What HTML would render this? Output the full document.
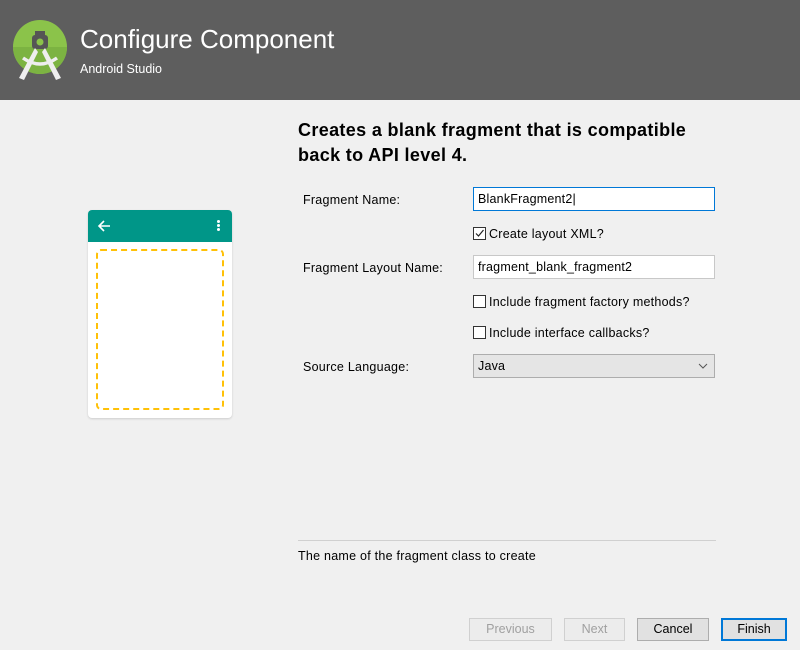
<!DOCTYPE html>
<html><head><style>
*{margin:0;padding:0;box-sizing:border-box}
body{width:800px;height:650px;background:#f0f0f0;font-family:"Liberation Sans",sans-serif;font-size:12.5px;color:#000;position:relative;overflow:hidden}
.hdr{position:absolute;left:0;top:0;width:800px;height:100px;background:#5e5e5e}
.a{position:absolute}
.t{letter-spacing:0.25px}
.inp{position:absolute;left:473px;width:242px;height:24px;border:1px solid #c8c8c8;background:#fff;padding:4px 4px;font-size:12.5px;letter-spacing:0.2px}
.cb{position:absolute;left:473px;width:13px;height:13px;border:1px solid #333;background:#fff}
.btn{position:absolute;top:618px;height:23px;border:1px solid #adadad;background:#e1e1e1;text-align:center;line-height:21px;font-size:12.5px}
</style></head><body>
<div class="hdr"></div>
<svg class="a" style="left:13px;top:20px" width="54" height="62" viewBox="0 0 54 62">
<circle cx="27" cy="27" r="27" fill="#8bc34a"/>
<path d="M0 27 A27 27 0 0 0 54 27Z" fill="#7cb342"/>
<rect x="22" y="11" width="10" height="5" fill="#555"/>
<rect x="19" y="15" width="16" height="14" rx="3" fill="#555"/>
<circle cx="27" cy="22" r="3.5" fill="#8bc34a"/>
<path d="M22 28 L6 58 L11 60 L25 32Z M32 28 L48 58 L43 60 L29 32Z" fill="#eee"/>
<path d="M10 38 Q27 50 44 38" stroke="#eee" stroke-width="3.5" fill="none"/>
</svg>
<div class="a" style="left:80px;top:24px;font-size:26px;color:#fff">Configure Component</div>
<div class="a" style="left:80px;top:62px;font-size:12.5px;color:#fff">Android Studio</div>

<div class="a" style="left:88px;top:210px;width:144px;height:208px;background:#fff;border-radius:4px;box-shadow:0 1px 2px rgba(0,0,0,.15)">
<div style="height:32px;background:#009688;border-radius:4px 4px 0 0;position:relative">
<svg class="a" style="left:9px;top:9px" width="14" height="14" viewBox="0 0 14 14"><path d="M13 7H2M7 2L2 7L7 12" stroke="#fff" stroke-width="1.6" fill="none"/></svg>
<div class="a" style="left:129px;top:10px;width:3px;height:3px;background:#fff;border-radius:50%;box-shadow:0 4px 0 #fff,0 8px 0 #fff"></div>
</div>
<div class="a" style="left:8px;top:39px;width:128px;height:161px;border:2.5px dashed #ffc107;border-radius:5px"></div>
</div>

<div class="a" style="left:298px;top:118px;font-size:18px;letter-spacing:0.35px;font-weight:bold;line-height:25px">Creates a blank fragment that is compatible<br>back to API level 4.</div>
<div class="a t" style="left:303px;top:193px">Fragment Name:</div>
<div class="inp" style="top:187px;border-color:#0078d7">BlankFragment2|</div>
<div class="cb" style="top:227px"><svg width="11" height="11" viewBox="0 0 11 11" style="display:block"><path d="M2 5.5L4.5 8L9.5 2" stroke="#222" stroke-width="1.2" fill="none"/></svg></div>
<div class="a t" style="left:489px;top:227px">Create layout XML?</div>
<div class="a t" style="left:303px;top:261px">Fragment Layout Name:</div>
<div class="inp" style="top:255px">fragment_blank_fragment2</div>
<div class="cb" style="top:295px"></div>
<div class="a t" style="left:489px;top:295px">Include fragment factory methods?</div>
<div class="cb" style="top:326px"></div>
<div class="a t" style="left:489px;top:326px">Include interface callbacks?</div>
<div class="a t" style="left:303px;top:360px">Source Language:</div>
<div class="inp" style="top:354px;background:#e5e5e5;border-color:#adadad">Java<svg style="position:absolute;right:6px;top:8px" width="10" height="6" viewBox="0 0 10 6"><path d="M1 1L5 5L9 1" stroke="#555" stroke-width="1" fill="none"/></svg></div>

<div class="a" style="left:298px;top:540px;width:418px;height:1px;background:#d0d0d0"></div>
<div class="a t" style="left:298px;top:549px">The name of the fragment class to create</div>

<div class="btn" style="left:469px;width:83px;color:#a0a0a0;border-color:#d0d0d0;background:#ececec">Previous</div>
<div class="btn" style="left:564px;width:61px;color:#a0a0a0;border-color:#d0d0d0;background:#ececec">Next</div>
<div class="btn" style="left:637px;width:72px">Cancel</div>
<div class="btn" style="left:721px;width:66px;border:2px solid #0078d7;line-height:19px">Finish</div>
</body></html>
